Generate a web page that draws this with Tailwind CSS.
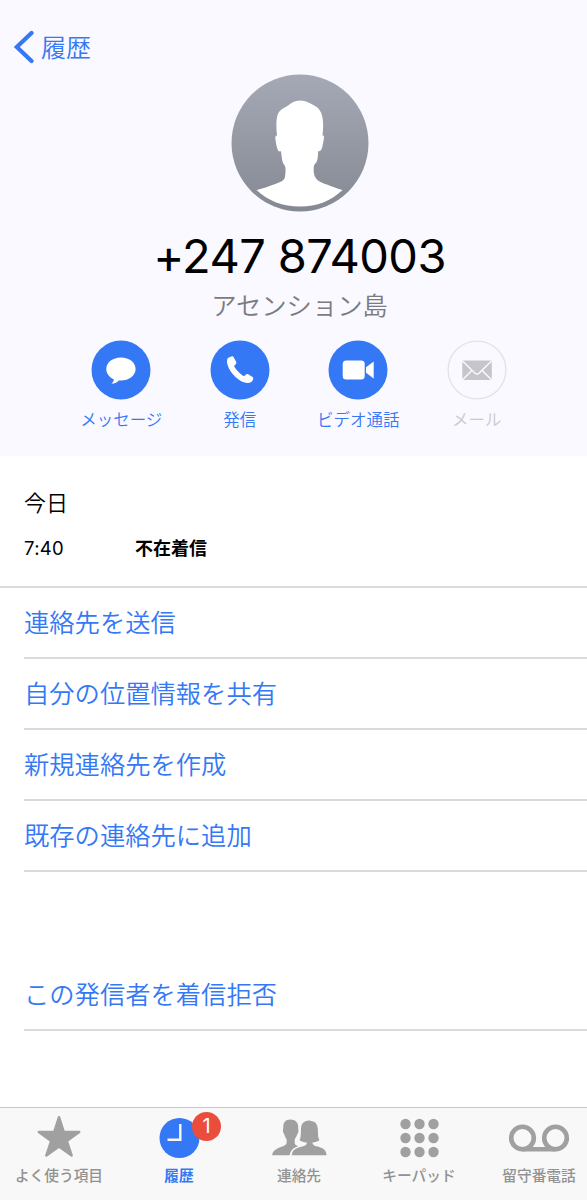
<!DOCTYPE html>
<html lang="ja">
<head>
    <meta charset="UTF-8">
    <meta name="viewport" content="width=device-width, initial-scale=1.0">
    <title>履歴</title>
    <script src="https://cdn.jsdelivr.net/npm/@tailwindcss/browser@4"></script>
    <style>
        body {
            font-family: 'Inter', 'Noto Sans CJK JP', sans-serif;
        }
    </style>
</head>
<body class="bg-white text-black">

    <div class="flex flex-col w-[587px] h-[1200px] overflow-hidden">

        <!-- Header -->
        <header class="h-[456px] shrink-0 bg-[#f9f9ff] flex flex-col items-center">
            <a class="self-start flex items-center h-[74px] pt-5 pl-[13px] text-[#3478f6]">
                <svg class="w-[21px] h-[34px]" viewBox="0 0 21 34" fill="none" stroke="currentColor" stroke-width="4.2" stroke-linecap="round" stroke-linejoin="miter">
                    <path d="M18.5 3 L3.8 17 L18.5 31"/>
                </svg>
                <span class="ml-[7px] pt-px text-[25px] leading-[34px] font-[350]">履歴</span>
            </a>

            <svg class="w-[138px] h-[138px] ml-3" viewBox="0 0 138 138">
                <defs>
                    <linearGradient id="avatar" x1="0" y1="0" x2="0" y2="1">
                        <stop offset="0" stop-color="#a5a9b5"/>
                        <stop offset="1" stop-color="#858993"/>
                    </linearGradient>
                </defs>
                <circle cx="69" cy="69" r="68.5" fill="url(#avatar)"/>
                <path fill="#fff" d="M69 26.5 C64 26.6 60 29 57 31.5 C54 34 51 34 48 38 C44.5 43 45.3 53 46 61.5 C44.4 61.5 44 63 44.5 66 C45.3 71 46.3 76 47.6 77 C48.3 77.6 49.4 77.3 50 77.3 C50.5 81 51 86 51.8 88.5 C52.5 90.5 54 91 54.3 93 C54.8 96 54.5 102 53.5 104.5 C52 108 43 110 36 113 C32 114.5 28 115.2 25.5 116 C37 127 52 132.5 69 132.5 C86 132.5 100 127 111.5 116 C108 115 105 114 101 112.5 C94 110 87 107.5 85 104.5 C82.5 101 82.4 96 82.8 92.5 C83 90 85.5 89 86.2 86.5 C86.9 84 87 80 87.2 77.3 C89.5 77.3 90.5 76.5 91.5 72 C92.5 67.5 93.5 62.5 92.6 61.7 C92.3 61.4 91.8 61.5 91.5 61.5 C92.6 53 92.5 44 90 38.5 C88 33.8 84.5 32 81 30.2 C77 28 73 26.5 69 26.5 Z"/>
            </svg>

            <h1 class="mt-[15px] ml-3 text-[47px] leading-[58px] tracking-[-0.6px]">+247 874003</h1>
            <p class="mt-1 ml-3 text-[25.3px] leading-[34px] font-[350] text-[#7b7b80]">アセンション島</p>

            <div class="mt-[17px] ml-[11px] grid grid-cols-[repeat(4,118.5px)] text-[16.5px] leading-[24px] text-[#3478f6]">
                <div class="flex flex-col items-center gap-2">
                    <svg class="w-[60px] h-[60px]" viewBox="0 0 60 60">
                        <circle cx="30" cy="30" r="29.5" fill="#3478f6"/>
                        <path fill="#fff" d="M30 17.5 C21.5 17.5 15.3 22.6 15.3 29 C15.3 33.5 18.3 37.3 22.7 39.2 C23 40.8 22 42.3 20.5 43.5 C23.8 43.6 26.2 42.3 27.8 40.4 C37 41.3 44.6 36.2 44.6 29 C44.6 22.6 38.5 17.5 30 17.5 Z"/>
                    </svg>
                    <span class="font-[350]">メッセージ</span>
                </div>
                <div class="flex flex-col items-center gap-2">
                    <svg class="w-[60px] h-[60px]" viewBox="0 0 60 60">
                        <circle cx="30" cy="30" r="29.5" fill="#3478f6"/>
                        <path fill="#fff" d="M18.8 17.6 L21.4 16.5 C22.5 16.1 23.3 16.6 23.8 17.5 L26 21.5 C26.7 22.9 26.5 23.7 25.4 24.5 C24 25.5 24 26.3 24.8 27.5 C27 30.7 29.5 33.3 32.6 35.5 C33.8 36.3 34.6 36.2 35.5 35.1 C36.5 33.9 37.3 33.8 38.6 34.5 L42.2 36.7 C43.2 37.4 43.5 38 43.2 39 C42.5 41.8 40.8 43 37.5 43 C28.5 42.7 17.2 30 17 21.5 C17 19.5 17.4 18.3 18.8 17.6 Z"/>
                    </svg>
                    <span class="font-[350]">発信</span>
                </div>
                <div class="flex flex-col items-center gap-2">
                    <svg class="w-[60px] h-[60px]" viewBox="0 0 60 60">
                        <circle cx="30" cy="30" r="29.5" fill="#3478f6"/>
                        <rect x="14.7" y="20.5" width="22" height="19" rx="3.5" fill="#fff"/>
                        <path fill="#fff" d="M38 27.2 L45.7 21.5 V38.5 L38 32.8 Z"/>
                    </svg>
                    <span class="font-[350]">ビデオ通話</span>
                </div>
                <div class="flex flex-col items-center gap-2 text-[#c9c9ce]">
                    <svg class="w-[60px] h-[60px]" viewBox="0 0 60 60">
                        <circle cx="30" cy="30" r="28.9" fill="none" stroke="#e2e2e7" stroke-width="1.3"/>
                        <rect x="15.3" y="20.5" width="29.5" height="19.5" fill="#c5c5ca"/>
                        <path d="M15 20.5 L28 33.3 Q30 35 32 33.3 L45 20.5 M15 40.3 L24.8 30.5 M45 40.3 L35.2 30.5" fill="none" stroke="#f9f9ff" stroke-width="1.5"/>
                    </svg>
                    <span class="font-[350]">メール</span>
                </div>
            </div>
        </header>

        <!-- Call log -->
        <section class="h-[132px] shrink-0 pl-6 pt-[31px] border-b-2 border-[#dadada]">
            <h2 class="text-[22px] leading-[32px] font-[350]">今日</h2>
            <div class="mt-[17px] flex text-[18px] leading-[26px]">
                <span class="w-[111px] text-[18.5px] leading-[25px] tracking-[0.3px]">7:40</span>
                <span class="font-bold">不在着信</span>
            </div>
        </section>

        <!-- Actions -->
        <ul class="pl-6 text-[25.3px] leading-[70px] font-[350] text-[#3478f6]">
            <li class="h-[71px] border-b-2 border-[#dadada]">連絡先を送信</li>
            <li class="h-[71px] border-b-2 border-[#dadada]">自分の位置情報を共有</li>
            <li class="h-[71px] border-b-2 border-[#dadada]">新規連絡先を作成</li>
            <li class="h-[71px] border-b-2 border-[#dadada]">既存の連絡先に追加</li>
            <li class="mt-[88px] h-[71px] border-b-2 border-[#dadada]">この発信者を着信拒否</li>
        </ul>

        <!-- Tab bar -->
        <nav class="mt-auto h-[93px] shrink-0 border-t border-[#c8c8c8] bg-[#f8f8f8]">
            <div class="-ml-px grid grid-cols-[repeat(5,120px)] text-[14.7px] leading-[22px] font-medium text-[#929292]">
                <div class="flex flex-col items-center pt-[6px]">
                    <svg class="w-[46px] h-[46px]" viewBox="0 0 46 46">
                        <path fill="#a0a0a0" stroke="#a0a0a0" stroke-width="2.5" stroke-linejoin="round" d="M23 3.2 L27.7 18 L43.2 18 L30.8 27 L35.6 41.5 L23 32.5 L10.4 41.5 L15.2 27 L2.8 18 L18.3 18 Z"/>
                    </svg>
                    <span class="mt-[5px]">よく使う項目</span>
                </div>
                <div class="flex flex-col items-center pt-[6px] text-[#3478f6]">
                    <div class="relative w-[46px] h-[46px]">
                        <svg class="w-[46px] h-[46px]" viewBox="0 0 46 46">
                            <circle cx="23.5" cy="24" r="20" fill="#3478f6"/>
                            <path d="M24.3 10 V25.8 H11.5" fill="none" stroke="#f8f8f8" stroke-width="2.4"/>
                        </svg>
                        <span class="absolute left-[36px] top-[-2px] w-[29px] h-[29px] rounded-full bg-[#eb4d3d] text-center text-[20px] leading-[28px] font-normal text-white">1</span>
                    </div>
                    <span class="mt-[5px] font-bold">履歴</span>
                </div>
                <div class="flex flex-col items-center pt-[6px]">
                    <svg class="w-[56px] h-[46px]" viewBox="0 0 56 46" fill="#a0a0a0">
                        <path d="M19.5 5.500 C14.5 5.500 12 8.500 12.300 13.500 C12.300 15 11.700 15.500 12 17.300 C12.300 19.300 12.900 20 13.500 20.700 C14 22.800 15 24.300 15.600 25.300 V29.300 C15 31.800 10 32.800 6 34.700 C2.500 36.500 1.200 38.500 1.200 41.300 H18.500 C20 36 22 34 27 32.200 C25.300 31.400 24 30.700 23.700 29.300 V25.300 C24.800 23.800 25.600 22.300 26 20.700 C26.800 20 27.300 18.500 27.500 17 C27.600 15.500 27 15 27.200 13.500 C27.500 8.500 24.500 5.500 19.500 5.500 Z"/>
                        <path d="M38.500 6.600 C32.500 6.400 30.200 10 30 15 C29.800 20 30 23.500 28.500 26 C30 27.800 33 28.300 35.700 28.400 C36 30.700 34.500 31.500 31.500 32.400 C25 34 21 35.600 20.800 41.300 H55.500 C55.300 35.600 51.500 34 46.500 32.600 C43 31.600 41.400 30.700 41.500 28.400 C44 28.300 47 27.800 48.500 26 C46.500 23 47.300 19.500 46.800 15 C46.500 10.500 44.500 7.400 40.700 7.300 C40 6.800 39.200 6.600 38.500 6.600 Z"/>
                    </svg>
                    <span class="mt-[5px]">連絡先</span>
                </div>
                <div class="flex flex-col items-center pt-[6px]">
                    <svg class="w-[46px] h-[46px]" viewBox="0 0 46 46" fill="#a0a0a0">
                        <circle cx="9.5" cy="10" r="5.200"/>
                        <circle cx="23.5" cy="10" r="5.200"/>
                        <circle cx="37.500" cy="10" r="5.200"/>
                        <circle cx="9.500" cy="24" r="5.200"/>
                        <circle cx="23.500" cy="24" r="5.200"/>
                        <circle cx="37.500" cy="24" r="5.200"/>
                        <circle cx="9.500" cy="38" r="5.200"/>
                        <circle cx="23.500" cy="38" r="5.200"/>
                        <circle cx="37.500" cy="38" r="5.200"/>
                    </svg>
                    <span class="mt-[5px]">キーパッド</span>
                </div>
                <div class="flex flex-col items-center pt-[6px]">
                    <svg class="w-[62px] h-[46px]" viewBox="0 0 62 46" fill="none" stroke="#a0a0a0" stroke-width="4.600">
                        <circle cx="14.500" cy="24" r="11.300"/>
                        <circle cx="47.500" cy="24" r="11.300"/>
                        <path d="M14.500 35.300 H47.500"/>
                    </svg>
                    <span class="mt-[5px]">留守番電話</span>
                </div>
            </div>
        </nav>
    </div>

</body>
</html>
